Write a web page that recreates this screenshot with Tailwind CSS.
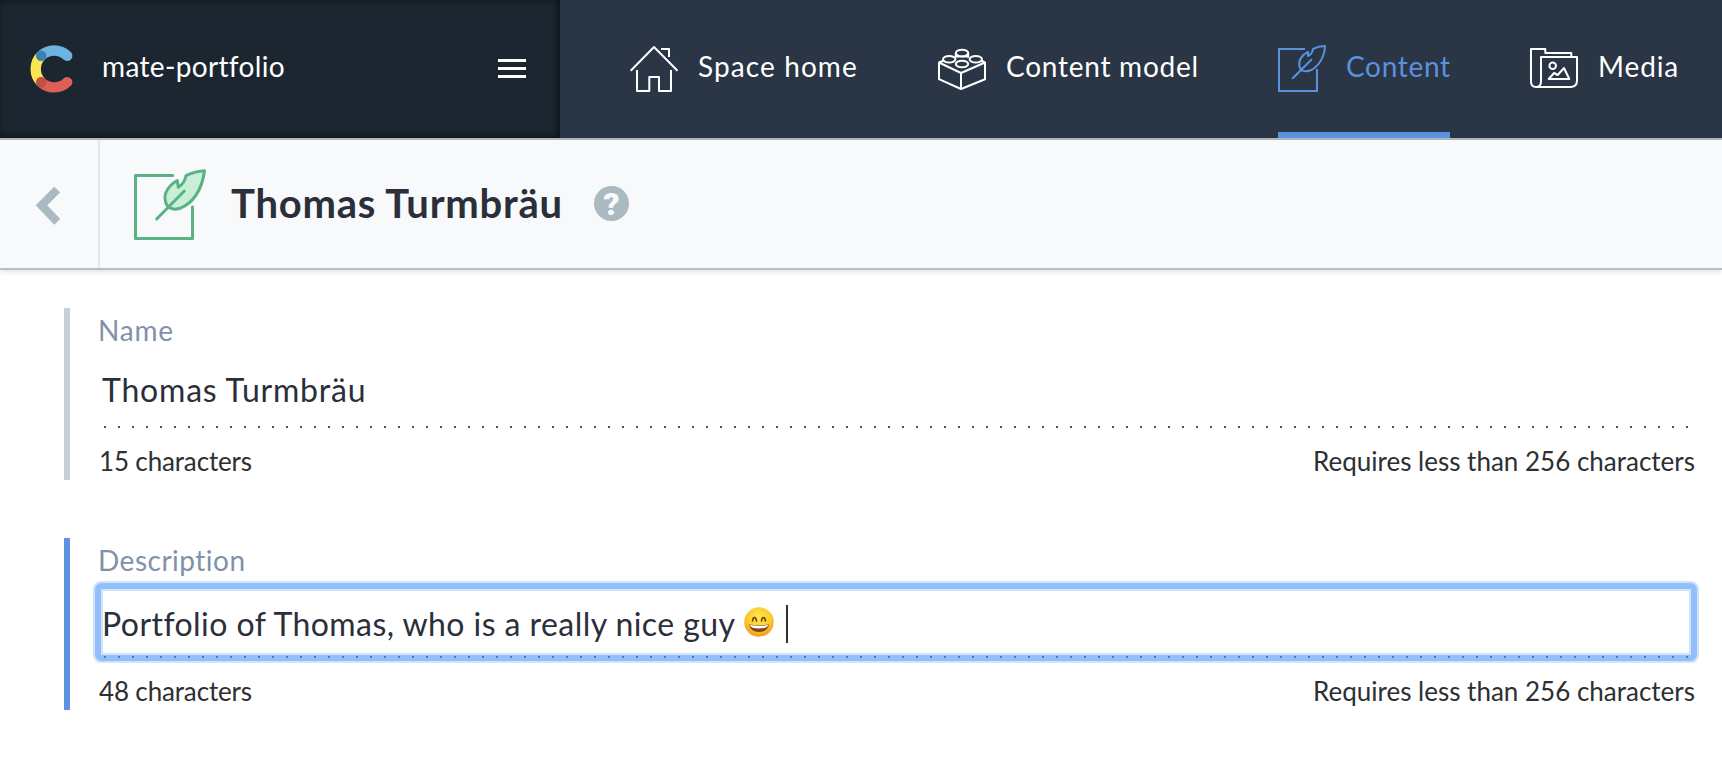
<!DOCTYPE html>
<html lang="en">
<head>
<meta charset="utf-8">
<title>Thomas Turmbräu</title>
<script src="https://cdn.jsdelivr.net/npm/@tailwindcss/browser@4"></script>
</head>
<body class="w-[1722px] h-[764px] overflow-hidden bg-white font-['Lato',sans-serif] text-[#2a2f3a]">
<header class="flex h-[140px] border-b-2 border-[#b4c0c7] bg-[#2a3545] text-white text-[28px] leading-[42px] whitespace-nowrap">
  <div class="flex w-[560px] h-full shrink-0 items-center bg-[#1c2631] shadow-[inset_-2px_-1px_9px_rgba(0,0,0,0.6)] pl-[30px] pr-[34px]">
    <svg class="w-12 h-[50px] mt-[-3px] shrink-0" viewBox="29.5 42 48 50" fill="none" stroke-width="10.4" stroke-linecap="round">
      <path d="M40.7 54.7A18.7 18.7 0 0 0 40.7 81.2" stroke="#fae54e" stroke-linecap="butt"/>
      <path d="M40.7 54.7A18.7 18.7 0 0 1 66.7 54.8" stroke="#6cb4df"/>
      <path d="M40.7 81.2A18.7 18.7 0 0 0 66.7 81.1" stroke="#dd5f56"/>
      <circle cx="40.7" cy="54.7" r="5.2" fill="#3c80b5" stroke="none"/>
      <circle cx="40.7" cy="81.2" r="5.2" fill="#c05042" stroke="none"/>
    </svg>
    <span class="ml-6 mt-[-6px] tracking-[0.35px]">mate-portfolio</span>
    <div class="ml-auto mt-[-2px] flex w-7 flex-col gap-[5px]">
      <i class="h-[3px] bg-white"></i><i class="h-[3px] bg-white"></i><i class="h-[3px] bg-white"></i>
    </div>
  </div>
  <nav class="flex h-full pl-[70px] gap-20">
    <a class="flex w-[228px] items-center gap-5 pb-2">
      <svg class="w-12 h-[50px] shrink-0" viewBox="630 40 48 50" fill="none" stroke="currentColor" stroke-width="2" stroke-linejoin="round" overflow="visible">
        <path d="M630.7 70.7L654 47L677.5 70.7M661 49H669V57M637 70V91H649.3V77H659V91H671V70"/>
      </svg>
      <span class="mt-[2px] tracking-[1.1px]">Space home</span>
    </a>
    <a class="flex w-[260px] items-center gap-5 pb-2">
      <svg class="w-12 h-[50px] shrink-0" viewBox="938 40 48 50" fill="none" stroke="currentColor" stroke-width="2" stroke-linejoin="round" overflow="visible">
        <path d="M939 62.5L961 73L985 62.5V79.2L961 89L939 79.2ZM961 73V89M939 62.5L944 60.5M985 62.5L981 60.5M955 57L958 55.7M969 57L966 55.7"/>
        <g fill="#2a3545"><path d="M955.8 53V56.5H968.2V53"/><ellipse cx="962" cy="53" rx="6.2" ry="3.3"/><ellipse cx="949.2" cy="59.2" rx="6.2" ry="3.3"/><ellipse cx="975.8" cy="59.2" rx="6.2" ry="3.3"/><ellipse cx="962" cy="64" rx="6.2" ry="3.3"/></g>
      </svg>
      <span class="mt-[2px] tracking-[0.75px]">Content model</span>
    </a>
    <a class="flex w-[172px] items-center gap-5 pb-[2px] border-b-6 border-[#5b91de] text-[#5b91de]">
      <svg class="w-12 h-[50px] shrink-0" viewBox="1278 40 48 50" fill="none" stroke="currentColor" stroke-width="2" stroke-linejoin="round" overflow="visible">
        <path d="M1305 49H1279V91H1317V69"/>
        <path d="M1325 46C1321 46 1316.500 47 1313 48.800C1312.500 52 1311 54.500 1308 56V51.800C1302 54.500 1298 61 1299.500 66.500C1300.500 71 1305 72.300 1310 70.500C1318 67 1324.500 58 1325 46ZM1292.700 78.300L1311.300 59.700" stroke-linecap="round"/>
      </svg>
      <span class="mt-[2px] tracking-[0.7px]">Content</span>
    </a>
    <a class="flex items-center gap-5 pb-2">
      <svg class="w-12 h-[50px] shrink-0" viewBox="1530 40 48 50" fill="none" stroke="currentColor" stroke-width="2" stroke-linejoin="round" overflow="visible">
        <path d="M1571.300 57V53H1545.300V49H1531V81.500Q1531 87 1536 87H1571Q1577 86.500 1577 80.500V57H1541V81.500Q1541 87 1536 87"/>
        <circle cx="1552.700" cy="65.700" r="3.300"/><path d="M1548.700 79L1554 73L1557.700 75L1564 68L1569.300 79Z"/>
      </svg>
      <span class="mt-[2px] tracking-[0.9px]">Media</span>
    </a>
  </nav>
</header>
<section class="flex h-[130px] items-center border-b-2 border-[#b4c0c7] bg-[#f7f9fb] shadow-[0_1px_6px_rgba(0,0,0,0.16)]">
  <div class="flex h-full w-[100px] shrink-0 border-r-2 border-[#e5e8eb]">
    <svg class="w-[98px] h-32" viewBox="0 140 98 128"><path d="M36.200 205.300L54.300 187.200L59.700 192.300L46.800 205.300L59.700 219L54.300 224.200Z" fill="#abb9c0" stroke="#abb9c0" stroke-linejoin="round"/></svg>
  </div>
  <svg class="ml-8 w-[76px] h-32 shrink-0" viewBox="132 140 76 128" fill="none" stroke="#58b284" stroke-width="3" stroke-linejoin="round" stroke-linecap="round">
    <path d="M172.700 175.500H135.500V238.500H192.500V207"/>
    <path d="M204.500 170.800C198 171.300 191.500 172.800 186 175.700C185 180.500 183 184.500 178.300 187.200L177.300 180.500C169 185 163.500 193.500 165.300 200.500C166.500 208.500 173 210.500 180 208.300C192.500 203.500 202 190.500 204.500 170.800Z" fill="#c9f0d7"/>
    <path d="M156.700 219L184.300 191"/>
  </svg>
  <h1 class="ml-[23px] w-[332px] mt-[-2px] font-bold text-[40px] leading-[50px] tracking-[0.75px] whitespace-nowrap">Thomas Turmbräu</h1>
  <div class="ml-[31px] mt-[-1px] flex size-[35px] items-center justify-center rounded-full bg-[#abb9c0] font-['Roboto'] font-black text-[32px] leading-none text-[#f7f9fb]">?</div>
</section>
<main class="flex flex-col gap-[58px] pt-[38px] pl-16 whitespace-nowrap">
  <div class="h-[172px] border-l-6 border-[#c3d0d6] pl-[23px]">
    <div class="h-[43px] pt-px pl-[5px] text-[28px] leading-[42px] tracking-[0.8px] text-[#8191a8]">Name</div>
    <div class="relative flex h-[82px] w-[1606px] items-center pl-[9px] pb-[4px] text-[32px] tracking-[0.8px]"><span>Thomas Turmbräu</span>
      <div class="absolute left-[11px] top-[75px] h-[2px] w-[1585px] bg-[repeating-linear-gradient(90deg,#454c5a_0_2px,transparent_2px_14px)]"></div>
    </div>
    <div class="flex w-[1602px] justify-between pt-[8px] pl-[6px] text-[26px] leading-10 text-[#2d2f31]"><span class="tracking-[-0.15px]">15 characters</span><span>Requires less than 256 characters</span></div>
  </div>
  <div class="h-[172px] border-l-6 border-[#5b91de] pl-[23px]">
    <div class="h-[43px] pt-px pl-[5px] text-[28px] leading-[42px] tracking-[0.5px] text-[#8191a8]">Description</div>
    <div class="relative h-[82px] w-[1606px] rounded-[8px] border-2 border-[#cfe3fc]">
      <div class="h-full rounded-[6px] border-6 border-[#92bef9] bg-[#92bef9]">
        <div class="flex h-full items-center border-2 border-[#cfe3fc] bg-white pt-[4px] text-[32px]"><span class="ml-[-1px] w-[633px] tracking-[0.44px]">Portfolio of Thomas, who is a really nice guy</span>
          <svg class="ml-[9px] mb-[5px] size-[30px] shrink-0" viewBox="0 0 30 30"><defs><radialGradient id="f" cx=".5" cy=".35" r=".65"><stop offset="0" stop-color="#ffe84e"/><stop offset=".6" stop-color="#fdcb2f"/><stop offset="1" stop-color="#f09a18"/></radialGradient></defs><circle cx="15" cy="15" r="14.700" fill="url(#f)"/><path d="M8.500 14Q9 10.500 10.500 10.500T12.500 14M17.500 14Q18 10.500 19.500 10.500T21.500 14" fill="none" stroke="#6b3c0a" stroke-width="1.600" stroke-linecap="round"/><path d="M5 17.500Q15 19 25 17.500Q23.500 25 15 25T5 17.500Z" fill="#7a4a12"/><path d="M5.800 18Q15 19.500 24.200 18Q23.500 21.500 15 21.500T5.800 18Z" fill="#fff"/></svg>
          <i class="ml-3 h-[38px] w-[2px] bg-[#2a2f3a]"></i>
        </div>
      </div>
      <div class="absolute left-[9px] top-[73px] h-[2px] w-[1585px] bg-[repeating-linear-gradient(90deg,#4c78b8_0_2px,transparent_2px_14px)]"></div>
    </div>
    <div class="flex w-[1602px] justify-between pt-[8px] pl-[6px] text-[26px] leading-10 text-[#2d2f31]"><span class="tracking-[-0.15px]">48 characters</span><span>Requires less than 256 characters</span></div>
  </div>
</main>
</body>
</html>
